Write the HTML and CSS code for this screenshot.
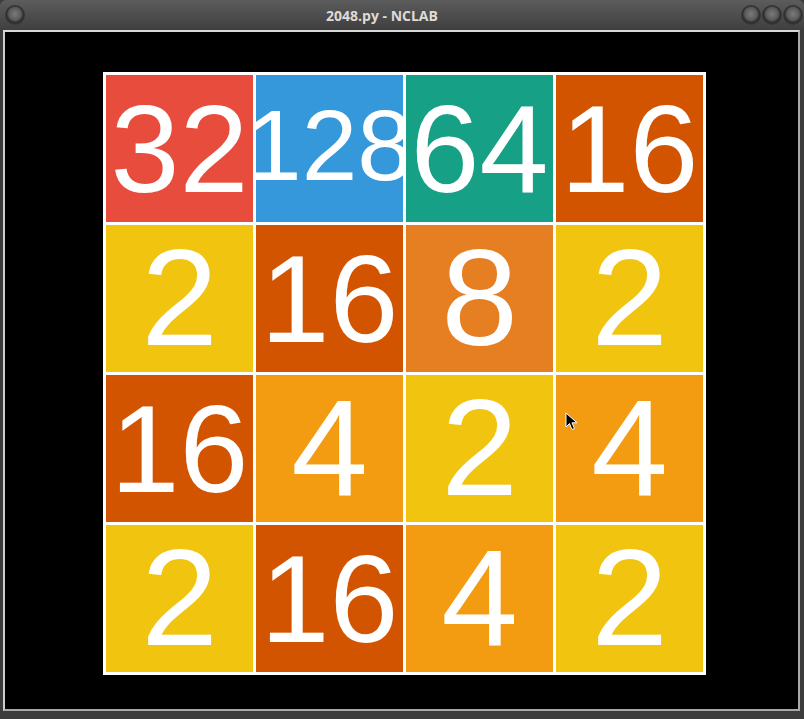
FILE: index.html
```html
<!DOCTYPE html>
<html>
<head>
<meta charset="utf-8">
<title>2048.py - NCLAB</title>
<link rel="stylesheet" href="styles.css">
</head>
<body>
<div class="window">
  <div class="titlebar">
    <div class="btns left"><span class="btn"></span></div>
    <div class="title">2048.py - NCLAB</div>
    <div class="btns right"><span class="btn"></span><span class="btn"></span><span class="btn"></span></div>
  </div>
  <div class="client">
    <div class="board">
      <div class="tile c32 d2">32</div>
      <div class="tile c128 d3">128</div>
      <div class="tile c64 d2">64</div>
      <div class="tile c16 d2">16</div>

      <div class="tile c2 d1">2</div>
      <div class="tile c16 d2">16</div>
      <div class="tile c8 d1">8</div>
      <div class="tile c2 d1">2</div>

      <div class="tile c16 d2">16</div>
      <div class="tile c4 d1">4</div>
      <div class="tile c2 d1">2</div>
      <div class="tile c4 d1">4</div>

      <div class="tile c2 d1">2</div>
      <div class="tile c16 d2">16</div>
      <div class="tile c4 d1">4</div>
      <div class="tile c2 d1">2</div>
    </div>
    <svg class="cursor" width="14" height="20" viewBox="0 0 14 20">
      <path d="M1 1 L1 15 L4.5 11.5 L7 17.5 L9.5 16.5 L7 10.8 L12 10.8 Z" fill="#000" stroke="#fff" stroke-width="1" stroke-linejoin="round"/>
    </svg>
  </div>
</div>
</body>
</html>
```

FILE: styles.css
```css
html, body {
  margin: 0;
  padding: 0;
  background: #3b3b3b;
}
.window {
  width: 804px;
  height: 719px;
  background: #3c3c3c;
  border-radius: 6px 6px 0 0;
  display: flex;
  flex-direction: column;
  overflow: hidden;
}
.titlebar {
  height: 30px;
  flex: none;
  display: flex;
  align-items: center;
  background: linear-gradient(#5c5c5c, #3f3f3f);
}
.btns {
  display: flex;
  gap: 1px;
  align-items: center;
}
.btns.left {
  width: 30px;
  padding-left: 5px;
  box-sizing: border-box;
}
.btns.right {
  width: 72px;
  padding-right: 1px;
  box-sizing: border-box;
  justify-content: flex-end;
}
.btn {
  width: 20px;
  height: 20px;
  border-radius: 50%;
  box-sizing: border-box;
  background: radial-gradient(circle at 50% 45%, #7a7a7a 0, #5a5a5a 42%, #2f2f2f 56%, #3a3a3a 78%, #555 100%);
}
.title {
  flex: 1;
  text-align: center;
  font-family: "Open Sans", "DejaVu Sans", sans-serif;
  font-weight: bold;
  font-size: 14px;
  color: #dedbd6;
  padding-left: 2px;
}
.client {
  position: relative;
  margin: 0 4px 8px 3px;
  flex: 1;
  background: #000;
  border-top: 2px solid #d8d8d8;
  border-left: 2px solid #cfcfcf;
  border-right: 2px solid #aaaaaa;
  border-bottom: 2px solid #a8a8a8;
  padding: 40px 0 0 98px;
}
.board {
  width: 603px;
  height: 603px;
  box-sizing: border-box;
  background: #fff;
  padding: 3px;
  display: grid;
  grid-template-columns: repeat(4, 147px);
  grid-template-rows: repeat(4, 147px);
  gap: 3px;
}
.tile {
  display: flex;
  align-items: center;
  justify-content: center;
  color: #fff;
  font-family: "Liberation Sans", Arial, sans-serif;
  line-height: 1;
  white-space: nowrap;
  overflow: visible;
}
.d1 { font-size: 138px; padding-bottom: 3px; }
.d2 { font-size: 124px; }
.d3 { font-size: 100px; padding-bottom: 8px; }
.c2 { background: #f1c40f; }
.c4 { background: #f39c12; }
.c8 { background: #e67e22; }
.c16 { background: #d35400; }
.c32 { background: #e74c3c; }
.c64 { background: #16a085; }
.c128 { background: #3498db; }
.cursor {
  position: absolute;
  left: 560px;
  top: 380px;
}
```
